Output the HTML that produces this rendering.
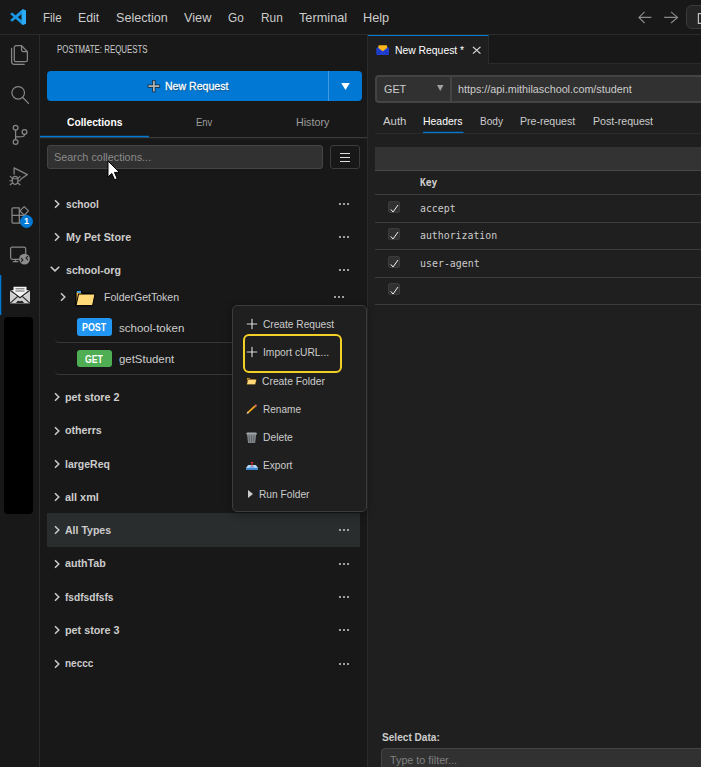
<!DOCTYPE html>
<html lang="en">
<head>
<meta charset="utf-8">
<title>Postmate: Requests</title>
<style>
*{box-sizing:border-box;margin:0;padding:0}
html,body{width:701px;height:767px;overflow:hidden;background:#181818}
body{position:relative;font-family:"Liberation Sans","DejaVu Sans",sans-serif;font-size:12px;color:#cccccc;-webkit-font-smoothing:antialiased}
.abs{position:absolute}
.t{position:absolute;white-space:nowrap;line-height:16px}
/* title bar */
#titlebar{position:absolute;left:0;top:0;width:701px;height:35px;background:#181818;border-bottom:1px solid #2b2b2b}
.menu{font-size:13.5px;color:#cccccc;top:9px}
/* activity bar */
#activity{position:absolute;left:0;top:35px;width:40px;height:732px;background:#181818;border-right:1px solid #2b2b2b}
/* sidebar */
#sidebar{position:absolute;left:40px;top:35px;width:328px;height:732px;background:#181818;border-right:1px solid #2b2b2b}
/* editor */
#tabbar{position:absolute;left:368px;top:35px;width:333px;height:29px;background:#181818;border-bottom:1px solid #2b2b2b}
#tab{position:absolute;left:0;top:0;width:121px;height:29px;background:#1f1f1f;border-top:1px solid #0078d4;border-right:1px solid #2b2b2b}
#editor{position:absolute;left:368px;top:64px;width:333px;height:703px;background:#1f1f1f}
.row{position:absolute;left:0;width:328px;height:33px}
.name{font-weight:bold;font-size:11.5px;color:#cccccc;left:25px}
.dots{position:absolute;width:12px;height:3px}
.dots i{position:absolute;top:0;width:2px;height:2px;background:#cccccc;border-radius:1px}
.chev{position:absolute}
.mi{font-size:11.5px;color:#cccccc}
.hline{position:absolute;height:1px;background:#2b2b2b}
.mono{font-family:"DejaVu Sans Mono","Liberation Mono",monospace;font-size:10px;color:#cccccc}
.cb{position:absolute;left:388px;width:12px;height:12px;background:#313131;border:1px solid #3c3c3c;border-radius:2px}
</style>
</head>
<body>

<!-- ============ TITLE BAR ============ -->
<div id="titlebar">
  <svg class="abs" style="left:9.8px;top:8.9px" width="16.6" height="16.2" viewBox="0 0 16.6 16.2">
    <path d="M12.7 0 L11.5 5.3 L2 12.7 L0.2 11.1 Z" fill="#1a96e6"/>
    <path d="M12.7 16.2 L11.5 10.9 L2 3.5 L0.2 5.1 Z" fill="#1a96e6"/>
    <path d="M11.5 2.4 L12.7 0 L16.6 1.8 V14.4 L12.7 16.2 L11.5 13.8 Z" fill="#2aabf3"/>
  </svg>
  <span id="t0" class="t menu" style="left:43.3px;top:10px;transform:scaleX(0.8512);transform-origin:0 50%;">File</span>
  <span id="t1" class="t menu" style="left:78.4px;top:10px;transform:scaleX(0.9099);transform-origin:0 50%;">Edit</span>
  <span id="t2" class="t menu" style="left:116.3px;top:10px;transform:scaleX(0.9312);transform-origin:0 50%;">Selection</span>
  <span id="t3" class="t menu" style="left:184.3px;top:10px;transform:scaleX(0.9413);transform-origin:0 50%;">View</span>
  <span id="t4" class="t menu" style="left:227.5px;top:10px;transform:scaleX(0.8739);transform-origin:0 50%;">Go</span>
  <span id="t5" class="t menu" style="left:260.8px;top:10px;transform:scaleX(0.88);transform-origin:0 50%;">Run</span>
  <span id="t6" class="t menu" style="left:298.8px;top:10px;transform:scaleX(0.9434);transform-origin:0 50%;">Terminal</span>
  <span id="t7" class="t menu" style="left:362.7px;top:10px;transform:scaleX(0.94);transform-origin:0 50%;">Help</span>
  <svg class="abs" style="left:630px;top:0" width="71" height="34" viewBox="630 0 71 34" fill="none" stroke="#8a8a8a" stroke-width="1.1">
    <path d="M651.4 17.4 H639 M644.6 11.8 L638.9 17.4 L644.6 23"/>
    <path d="M664.2 17.4 H677.4 M671 11.8 L677.6 17.4 L671 23"/>
    <rect x="686.5" y="5.5" width="30" height="23" rx="5.5" fill="#252525" stroke="#3a3a3a" stroke-width="1"/>
    <path d="M701 13.6 H698.4 V23.4 H701" stroke="#c0c0c0" stroke-width="1.2"/>
  </svg>
</div>

<!-- ============ ACTIVITY BAR ============ -->
<div id="activity">
  <svg class="abs" style="left:0;top:-35px" width="40" height="767" viewBox="0 0 40 767" fill="none" stroke="#868686" stroke-width="1.25" stroke-linejoin="round" stroke-linecap="round">
    <!-- files -->
    <path d="M16 45.7 H21.6 L27.4 51.6 V60 a1.7 1.7 0 0 1 -1.7 1.7 H16 a1.7 1.7 0 0 1 -1.7 -1.7 V47.4 A1.7 1.7 0 0 1 16 45.7 Z"/>
    <path d="M21.6 45.9 V50 a1.5 1.5 0 0 0 1.5 1.5 H27.2"/>
    <path d="M11.6 48.4 V61.6 a2.8 2.8 0 0 0 2.8 2.8 H24.2"/>
    <!-- search -->
    <circle cx="18.2" cy="92.8" r="6.3"/>
    <path d="M22.8 97.5 L28.5 103.4"/>
    <!-- source control -->
    <circle cx="15.6" cy="127.8" r="2.4"/>
    <circle cx="24.5" cy="132" r="2.4"/>
    <circle cx="15.6" cy="141.9" r="2.4"/>
    <path d="M15.6 130.2 V139.5 M24.5 134.4 C24.5 137.2 22 136.7 15.8 136.9"/>
    <!-- run and debug -->
    <path d="M14.1 174 V167.9 L27.4 174.6 L20.6 179.3"/>
    <ellipse cx="15.1" cy="180.3" rx="2.9" ry="4"/>
    <path d="M12.4 178.4 L10.2 176.4 M17.8 178.4 L20 176.4 M12.2 180.8 H9.8 M18 180.8 H20.4 M12.4 183 L10.2 184.8 M17.8 183 L20 184.8 M12.6 178.7 H17.6" stroke-width="1.1"/>
    <!-- extensions -->
    <path d="M13.2 207.9 H19.3 V223.2 H13.2 a1.2 1.2 0 0 1 -1.2 -1.2 V209.1 a1.2 1.2 0 0 1 1.2 -1.2 Z M12 215.4 H27 V222 a1.2 1.2 0 0 1 -1.2 1.2 H19.3"/>
    <path d="M24.2 206.6 L28.5 210.9 L24.2 215.2 L19.9 210.9 Z"/>
    <!-- remote explorer -->
    <path d="M19 259.3 H12.4 a1.8 1.8 0 0 1 -1.8 -1.8 V248.9 a1.8 1.8 0 0 1 1.8 -1.8 H23.9 a1.8 1.8 0 0 1 1.8 1.8 V253.5"/>
    <path d="M13.2 261.6 H17.8 M15.6 259.5 V261.4"/>
  </svg>
  <div class="abs" style="left:20px;top:180px;width:13px;height:13px;border-radius:7px;background:#0078d4"></div>
  <span id="t9" class="t" style="left:24px;top:180px;font-size:9px;font-weight:bold;color:#fff;line-height:13px">1</span>
  <svg class="abs" style="left:18px;top:218px" width="13" height="13" viewBox="0 0 13 13">
    <circle cx="6.5" cy="6.1" r="5.4" fill="#8c8c8c"/>
    <path d="M3 5 L4.9 6.9 L3 8.8 M9.9 3.2 L8 5.1 L9.9 7" fill="none" stroke="#1f1f1f" stroke-width="1.1"/>
  </svg>
  <!-- postmate (active) -->
  <div class="abs" style="left:0;top:240px;width:1px;height:40px;background:#0078d4"></div>
  <div class="abs" style="left:1px;top:240px;width:1px;height:40px;background:#0078d4;opacity:.3"></div>
  <svg class="abs" style="left:9px;top:251px" width="22" height="18" viewBox="0 0 22 18">
    <path d="M1 4 H21 V17.4 H1 Z" fill="#cfcfcf"/>
    <path d="M4.5 0.7 H17.5 V9 L11 12 L4.5 9 Z" fill="#f4f4f4"/>
    <path d="M6.5 2.8 H15.5 M6.5 5 H15.5" stroke="#555555" stroke-width="0.9"/>
    <path d="M1.2 4.2 L11 11.8 L20.8 4.2 M1.2 17.2 L9 10.2 M20.8 17.2 L13 10.2" stroke="#222222" stroke-width="1.1" fill="none"/>
    <path d="M7 17 Q9 13.5 11 15.5 Q13 13.5 15 17 Z" fill="#222222"/>
  </svg>
  <!-- black box -->
  <div class="abs" style="left:4px;top:282px;width:29px;height:197px;background:#000;border-radius:4px"></div>
</div>

<!-- ============ SIDEBAR ============ -->
<div id="sidebar">
  <span id="t10" class="t" style="left:16.9px;top:7.1px;transform:scaleX(0.7892);transform-origin:0 50%;font-size:10px;color:#cccccc">POSTMATE: REQUESTS</span>

  <!-- new request button -->
  <div class="abs" style="left:7px;top:36px;width:315px;height:30px;background:#0078d4;border-radius:4px"></div>
  <div class="abs" style="left:288px;top:36px;width:1px;height:30px;background:#4599df"></div>
  <svg class="abs" style="left:107px;top:44px" width="14" height="14" viewBox="0 0 14 14" fill="none"><path d="M6.9 2.5 V11.7 M2.3 7.1 H11.5" stroke="#1a1a1a" stroke-width="3.2" stroke-linecap="square" stroke-opacity="0.85"/><path d="M6.9 2.5 V11.7 M2.3 7.1 H11.5" stroke="#b4b4b4" stroke-width="1.7" stroke-linecap="square"/></svg>
  <span id="t11" class="t" style="left:125px;top:43.21px;transform:scaleX(0.9178);transform-origin:0 50%;font-size:11.5px;color:#ffffff;-webkit-text-stroke:0.3px #fff;text-shadow:0.5px 1px 1px rgba(0,0,0,.45)">New Request</span>
  <svg class="abs" style="left:301px;top:48px" width="9" height="7" viewBox="0 0 9 7"><path d="M0.2 0 H8.8 L4.5 7 Z" fill="#ffffff"/></svg>

  <!-- tabs -->
  <span id="t12" class="t" style="left:26.9px;top:79.21px;transform:scaleX(0.8938);transform-origin:0 50%;font-size:11.5px;font-weight:bold;color:#ffffff">Collections</span>
  <span id="t13" class="t" style="left:155.8px;top:79.21px;transform:scaleX(0.8254);transform-origin:0 50%;font-size:11.5px;color:#9d9d9d">Env</span>
  <span id="t14" class="t" style="left:255.6px;top:79.21px;transform:scaleX(0.9322);transform-origin:0 50%;font-size:11.5px;color:#9d9d9d">History</span>
  <svg class="abs" style="left:0;top:99px" width="327" height="6" viewBox="0 0 327 6"><rect x="0" y="3.1" width="327" height="1.1" fill="#404040"/><rect x="0" y="1.8" width="109" height="1.4" fill="#0078d4"/></svg>

  <!-- search -->
  <div class="abs" style="left:7px;top:110px;width:276px;height:24px;background:#313131;border:1px solid #444444;border-radius:3px"></div>
  <span id="t15" class="t" style="left:14.0px;top:114.4px;transform:scaleX(0.987);transform-origin:0 50%;font-size:11px;color:#8a8a8a">Search collections...</span>
  <div class="abs" style="left:290px;top:110px;width:30px;height:24px;background:#181818;border:1px solid #3c3c3c;border-radius:3px"></div>
  <svg class="abs" style="left:300px;top:117px" width="10" height="10" viewBox="0 0 10 10" stroke="#dddddd" stroke-width="1"><path d="M0 1.5 H10 M0 5.5 H10 M0 9.5 H10"/></svg>

  <!-- collections list: placeholder, filled below -->
  <div id="list">
<div class="abs" style="left:7px;top:478px;width:313px;height:34px;background:#2a2d2e"></div>
<svg class="abs" style="left:12.5px;top:163.2px" width="8" height="12" viewBox="0 0 8 12" fill="none" stroke="#cccccc" stroke-width="1.5"><path d="M2 2.2 L5.8 6 L2 9.8"/></svg>
<span id="t16" class="t name" style="left:25.9px;top:161px;transform:scaleX(0.886);transform-origin:0 50%;">school</span>
<div class="dots" style="left:299px;top:168px"><i style="left:0"></i><i style="left:4px"></i><i style="left:8px"></i></div>
<svg class="abs" style="left:12.5px;top:196.3px" width="8" height="12" viewBox="0 0 8 12" fill="none" stroke="#cccccc" stroke-width="1.5"><path d="M2 2.2 L5.8 6 L2 9.8"/></svg>
<span id="t17" class="t name" style="left:25.9px;top:194.21px;transform:scaleX(0.9358);transform-origin:0 50%;">My Pet Store</span>
<div class="dots" style="left:299px;top:201px"><i style="left:0"></i><i style="left:4px"></i><i style="left:8px"></i></div>
<svg class="abs" style="left:9px;top:230.4px" width="12" height="8" viewBox="0 0 12 8" fill="none" stroke="#cccccc" stroke-width="1.5"><path d="M1.7 1.7 L6 5.9 L10.3 1.7"/></svg>
<span id="t18" class="t name" style="left:25.8px;top:227.4px;transform:scaleX(0.9249);transform-origin:0 50%;">school-org</span>
<div class="dots" style="left:299px;top:234px"><i style="left:0"></i><i style="left:4px"></i><i style="left:8px"></i></div>
<svg class="abs" style="left:12.5px;top:356.3px" width="8" height="12" viewBox="0 0 8 12" fill="none" stroke="#cccccc" stroke-width="1.5"><path d="M2 2.2 L5.8 6 L2 9.8"/></svg>
<span id="t19" class="t name" style="left:25.2px;top:354.21px;transform:scaleX(0.9383);transform-origin:0 50%;">pet store 2</span>
<div class="dots" style="left:299px;top:361px"><i style="left:0"></i><i style="left:4px"></i><i style="left:8px"></i></div>
<svg class="abs" style="left:12.5px;top:389.5px" width="8" height="12" viewBox="0 0 8 12" fill="none" stroke="#cccccc" stroke-width="1.5"><path d="M2 2.2 L5.8 6 L2 9.8"/></svg>
<span id="t20" class="t name" style="left:25.2px;top:387.4px;transform:scaleX(0.9292);transform-origin:0 50%;">otherrs</span>
<div class="dots" style="left:299px;top:394px"><i style="left:0"></i><i style="left:4px"></i><i style="left:8px"></i></div>
<svg class="abs" style="left:12.5px;top:422.7px" width="8" height="12" viewBox="0 0 8 12" fill="none" stroke="#cccccc" stroke-width="1.5"><path d="M2 2.2 L5.8 6 L2 9.8"/></svg>
<span id="t21" class="t name" style="left:25.2px;top:420.6px;transform:scaleX(0.9116);transform-origin:0 50%;">largeReq</span>
<div class="dots" style="left:299px;top:428px"><i style="left:0"></i><i style="left:4px"></i><i style="left:8px"></i></div>
<svg class="abs" style="left:12.5px;top:455.9px" width="8" height="12" viewBox="0 0 8 12" fill="none" stroke="#cccccc" stroke-width="1.5"><path d="M2 2.2 L5.8 6 L2 9.8"/></svg>
<span id="t22" class="t name" style="left:25.2px;top:453.8px;transform:scaleX(0.9446);transform-origin:0 50%;">all xml</span>
<div class="dots" style="left:299px;top:461px"><i style="left:0"></i><i style="left:4px"></i><i style="left:8px"></i></div>
<svg class="abs" style="left:12.5px;top:489.1px" width="8" height="12" viewBox="0 0 8 12" fill="none" stroke="#cccccc" stroke-width="1.5"><path d="M2 2.2 L5.8 6 L2 9.8"/></svg>
<span id="t23" class="t name" style="left:25.2px;top:487px;transform:scaleX(0.9171);transform-origin:0 50%;">All Types</span>
<div class="dots" style="left:299px;top:494px"><i style="left:0"></i><i style="left:4px"></i><i style="left:8px"></i></div>
<svg class="abs" style="left:12.5px;top:522.5px" width="8" height="12" viewBox="0 0 8 12" fill="none" stroke="#cccccc" stroke-width="1.5"><path d="M2 2.2 L5.8 6 L2 9.8"/></svg>
<span id="t24" class="t name" style="left:25.2px;top:520.4px;transform:scaleX(0.9295);transform-origin:0 50%;">authTab</span>
<div class="dots" style="left:299px;top:528px"><i style="left:0"></i><i style="left:4px"></i><i style="left:8px"></i></div>
<svg class="abs" style="left:12.5px;top:555.9px" width="8" height="12" viewBox="0 0 8 12" fill="none" stroke="#cccccc" stroke-width="1.5"><path d="M2 2.2 L5.8 6 L2 9.8"/></svg>
<span id="t25" class="t name" style="left:25.2px;top:553.8px;transform:scaleX(0.8807);transform-origin:0 50%;">fsdfsdfsfs</span>
<div class="dots" style="left:299px;top:561px"><i style="left:0"></i><i style="left:4px"></i><i style="left:8px"></i></div>
<svg class="abs" style="left:12.5px;top:589.1px" width="8" height="12" viewBox="0 0 8 12" fill="none" stroke="#cccccc" stroke-width="1.5"><path d="M2 2.2 L5.8 6 L2 9.8"/></svg>
<span id="t26" class="t name" style="left:25.2px;top:587px;transform:scaleX(0.9383);transform-origin:0 50%;">pet store 3</span>
<div class="dots" style="left:299px;top:594px"><i style="left:0"></i><i style="left:4px"></i><i style="left:8px"></i></div>
<svg class="abs" style="left:12.5px;top:622.5px" width="8" height="12" viewBox="0 0 8 12" fill="none" stroke="#cccccc" stroke-width="1.5"><path d="M2 2.2 L5.8 6 L2 9.8"/></svg>
<span id="t27" class="t name" style="left:25.2px;top:620.4px;transform:scaleX(0.87);transform-origin:0 50%;">neccc</span>
<div class="dots" style="left:299px;top:628px"><i style="left:0"></i><i style="left:4px"></i><i style="left:8px"></i></div>
<svg class="abs" style="left:19.2px;top:256.4px" width="8" height="12" viewBox="0 0 8 12" fill="none" stroke="#cccccc" stroke-width="1.5"><path d="M2 2.2 L5.8 6 L2 9.8"/></svg>
<svg class="abs" style="left:35px;top:255px" width="21" height="17" viewBox="0 0 21 17"><path d="M1 1.2 H6.2 L7 3.4 H16 V15.6 H1 Z" fill="#e8b040" stroke="#000000" stroke-width="1.2" stroke-linejoin="round"/><rect x="1.8" y="0.9" width="4.2" height="2" fill="#3d9df0"/><path d="M3.6 4 H20 L17.6 15.6 H1 Z" fill="#ffd978" stroke="#000000" stroke-width="1" stroke-linejoin="round"/></svg>
<span id="t28" class="t" style="left:64.1px;top:254.3px;transform:scaleX(0.9179);transform-origin:0 50%;font-size:11.5px;color:#cccccc">FolderGetToken</span>
<div class="dots" style="left:293.5px;top:261px"><i style="left:0"></i><i style="left:4px"></i><i style="left:8px"></i></div>
<div class="abs" style="left:37px;top:283px;width:35px;height:18px;background:#2196f3;border-radius:3px"></div>
<span id="t29" class="t" style="left:42px;top:284.9px;transform:scaleX(0.8868);transform-origin:0 50%;font-size:10px;font-weight:bold;color:#ffffff">POST</span>
<span id="t30" class="t" style="left:78.5px;top:285px;transform:scaleX(1.0022);transform-origin:0 50%;font-size:11.5px;color:#cccccc">school-token</span>
<div class="abs" style="left:14.5px;top:278px;width:306px;height:30px;border-bottom:1px solid #363636;border-radius:4px"></div>
<div class="abs" style="left:37px;top:315px;width:35px;height:17px;background:#4fae54;border-radius:3px"></div>
<span id="t31" class="t" style="left:44.9px;top:316.9px;transform:scaleX(0.872);transform-origin:0 50%;font-size:10px;font-weight:bold;color:#ffffff">GET</span>
<span id="t32" class="t" style="left:78.5px;top:315.9px;transform:scaleX(0.9923);transform-origin:0 50%;font-size:11.5px;color:#cccccc">getStudent</span>
<div class="abs" style="left:14.5px;top:310px;width:306px;height:30px;border-bottom:1px solid #363636;border-radius:4px"></div>
</div>
</div>

<!-- ============ EDITOR ============ -->
<div id="tabbar">
  <div id="tab">
    <svg class="abs" style="left:7.8px;top:9.3px" width="13.5" height="11" viewBox="0 0 14 12" preserveAspectRatio="none">
      <path d="M0.3 3.6 L2.4 1.8 H11.6 L13.7 3.6 V10.2 a0.8 0.8 0 0 1 -0.8 0.8 H1.1 a0.8 0.8 0 0 1 -0.8 -0.8 Z" fill="#1f3fd2"/>
      <path d="M2.5 1 a0.7 0.7 0 0 1 0.7 -0.6 H10.8 a0.7 0.7 0 0 1 0.7 0.6 V3.2 L7 6.8 L2.5 3.2 Z" fill="#ffb81c"/>
      <path d="M0.5 10.6 L5 6.4 M13.5 10.6 L9 6.4" stroke="#142a9a" stroke-width="0.7" fill="none"/>
    </svg>
    <span id="t33" class="t" style="left:27.3px;top:6.3px;transform:scaleX(0.9012);transform-origin:0 50%;font-size:11.5px;color:#ffffff">New Request *</span>
    <svg class="abs" style="left:103.5px;top:10px" width="9.4" height="8.6" viewBox="0 0 10 10" preserveAspectRatio="none" stroke="#e0e0e0" stroke-width="1.2"><path d="M1 1 L9 9 M9 1 L1 9"/></svg>
  </div>
</div>
<div id="editor">
<div class="abs" style="left:7px;top:11px;width:340px;height:28px;background:#313131;border:2px solid #444444;border-radius:4px"></div>
<div class="abs" style="left:82px;top:12px;width:2px;height:26px;background:#444444"></div>
<span id="t34" class="t" style="left:15.5px;top:17.1px;transform:scaleX(0.9395);transform-origin:0 50%;font-size:11.5px;color:#cccccc">GET</span>
<svg class="abs" style="left:69px;top:21px" width="6.5" height="6" viewBox="0 0 7 7" preserveAspectRatio="none"><path d="M0 0 H7 L3.5 7 Z" fill="#a0a0a0"/></svg>
<span id="t35" class="t" style="left:90.2px;top:16.9px;transform:scaleX(0.9797);transform-origin:0 50%;font-size:11px;color:#cccccc">https://api.mithilaschool.com/student</span>
<span id="t36" class="t" style="left:15px;top:48.8px;transform:scaleX(0.9915);transform-origin:0 50%;font-size:11.5px;color:#cccccc">Auth</span>
<span id="t37" class="t" style="left:55px;top:48.8px;transform:scaleX(0.9077);transform-origin:0 50%;font-size:11.5px;color:#ffffff">Headers</span>
<span id="t38" class="t" style="left:112px;top:48.8px;transform:scaleX(0.8787);transform-origin:0 50%;font-size:11.5px;color:#cccccc">Body</span>
<span id="t39" class="t" style="left:152.2px;top:48.8px;transform:scaleX(0.9188);transform-origin:0 50%;font-size:11.5px;color:#cccccc">Pre-request</span>
<span id="t40" class="t" style="left:225.4px;top:48.8px;transform:scaleX(0.9207);transform-origin:0 50%;font-size:11.5px;color:#cccccc">Post-request</span>
<div class="hline" style="left:7px;top:69px;width:330px;background:#2b2b2b"></div>
<svg class="abs" style="left:55px;top:66px" width="41" height="4" viewBox="0 0 41 4"><rect x="0" y="1.8" width="40.4" height="1.3" fill="#0078d4"/></svg>
<div class="abs" style="left:7px;top:83px;width:330px;height:23px;background:#333333"></div>
<div class="hline" style="left:7px;top:106px;width:330px;background:#484848"></div>
<span id="t41" class="t mono" style="left:52.2px;top:111px;transform:scaleX(0.9651);transform-origin:0 50%;font-weight:bold">Key</span>
<div class="hline" style="left:7px;top:130px;width:330px;background:#3c3c3c"></div>
<div class="hline" style="left:7px;top:158px;width:330px;background:#3c3c3c"></div>
<div class="hline" style="left:7px;top:185px;width:330px;background:#3c3c3c"></div>
<div class="hline" style="left:7px;top:213px;width:330px;background:#3c3c3c"></div>
<div class="hline" style="left:7px;top:240px;width:330px;background:#3c3c3c"></div>
<div class="cb" style="left:20px;top:137px"></div>
<svg class="abs" style="left:22px;top:139.5px" width="9" height="9" viewBox="0 0 9 9" fill="none" stroke="#f0f0f0" stroke-width="1"><path d="M0.8 5.4 L3 8 L8 1"/></svg>
<span id="t42" class="t mono" style="left:51.8px;top:136.71px;transform:scaleX(0.9848);transform-origin:0 50%;">accept</span>
<div class="cb" style="left:20px;top:164px"></div>
<svg class="abs" style="left:22px;top:166.5px" width="9" height="9" viewBox="0 0 9 9" fill="none" stroke="#f0f0f0" stroke-width="1"><path d="M0.8 5.4 L3 8 L8 1"/></svg>
<span id="t43" class="t mono" style="left:51.8px;top:163.6px;transform:scaleX(0.9851);transform-origin:0 50%;">authorization</span>
<div class="cb" style="left:20px;top:192px"></div>
<svg class="abs" style="left:22px;top:194.5px" width="9" height="9" viewBox="0 0 9 9" fill="none" stroke="#f0f0f0" stroke-width="1"><path d="M0.8 5.4 L3 8 L8 1"/></svg>
<span id="t44" class="t mono" style="left:51.8px;top:191.5px;transform:scaleX(0.9924);transform-origin:0 50%;">user-agent</span>
<div class="cb" style="left:20px;top:219px"></div>
<svg class="abs" style="left:22px;top:221.5px" width="9" height="9" viewBox="0 0 9 9" fill="none" stroke="#f0f0f0" stroke-width="1"><path d="M0.8 5.4 L3 8 L8 1"/></svg>
<span id="t45" class="t" style="left:14.3px;top:665.3px;transform:scaleX(0.8786);transform-origin:0 50%;font-size:11.5px;font-weight:bold;color:#cccccc">Select Data:</span>
<div class="abs" style="left:13px;top:684px;width:330px;height:26px;background:#313131;border:1.5px solid #454545;border-radius:4px"></div>
<span id="t46" class="t" style="left:21.7px;top:688.3px;transform:scaleX(0.9799);transform-origin:0 50%;font-size:11px;color:#808080">Type to filter...</span>
</div>

<div id="ctx" class="abs" style="left:232px;top:305px;width:135px;height:207px;background:#1f1f1f;border:1px solid #3c3c3c;border-radius:5px;box-shadow:0 2px 8px rgba(0,0,0,.36)"><div class="abs" style="left:1px;top:0">
<svg class="abs" style="left:12px;top:12px" width="12" height="12" viewBox="0 0 12 12" fill="none"><path d="M6 0.3 V11.7 M0.3 6 H11.7" stroke="#000000" stroke-opacity="0.55" stroke-width="2.6"/><path d="M6 0.7 V11.3 M0.7 6 H11.3" stroke="#e4e4e4" stroke-width="1.15"/></svg>
<span id="t47" class="t mi" style="left:28.9px;top:9.8px;transform:scaleX(0.8834);transform-origin:0 50%;">Create Request</span>
<div class="abs" style="left:9px;top:28px;width:98.5px;height:39px;border:2px solid #f2d024;border-radius:6px"></div>
<svg class="abs" style="left:12px;top:40px" width="12" height="12" viewBox="0 0 12 12" fill="none"><path d="M6 0.3 V11.7 M0.3 6 H11.7" stroke="#000000" stroke-opacity="0.55" stroke-width="2.6"/><path d="M6 0.7 V11.3 M0.7 6 H11.3" stroke="#e4e4e4" stroke-width="1.15"/></svg>
<span id="t48" class="t mi" style="left:28.9px;top:38px;transform:scaleX(0.892);transform-origin:0 50%;">Import cURL...</span>
<svg class="abs" style="left:11.5px;top:71.2px" width="11.2" height="8.2" viewBox="0 0 11.2 8.2"><path d="M0.5 0.6 H3.6 L4.3 1.5 H9.4 V7.7 H0.5 Z" fill="#e8a93a" stroke="#0c0c0c" stroke-width="0.7"/><path d="M1.9 2.2 H10.8 L9.5 7.7 H0.5 Z" fill="#ffd778" stroke="#0c0c0c" stroke-width="0.6"/></svg>
<span id="t49" class="t mi" style="left:28.4px;top:67.21px;transform:scaleX(0.8963);transform-origin:0 50%;">Create Folder</span>
<svg class="abs" style="left:12.4px;top:98px" width="11.4" height="10.4" viewBox="0 0 11.4 10.4"><path d="M0.6 9.9 L1.5 7.4 L8.6 1 L10.2 2.7 L3.1 9.1 Z" fill="#f7a823" stroke="#111111" stroke-width="0.6" stroke-linejoin="round"/><path d="M8.6 1 L9.4 0.4 Q10.6 0.3 10.9 1.6 L10.2 2.7 Z" fill="#ef6a7a"/><path d="M0.6 9.9 L1.5 7.4 L3.1 9.1 Z" fill="#e9d9b6"/><path d="M0.6 9.9 L1 8.9 L1.6 9.5 Z" fill="#444444"/></svg>
<span id="t50" class="t mi" style="left:29.3px;top:94.8px;transform:scaleX(0.8744);transform-origin:0 50%;">Rename</span>
<svg class="abs" style="left:12.4px;top:125.5px" width="11.2" height="11.6" viewBox="0 0 11.2 11.6"><path d="M1 2.2 H10.2 L9.2 10.6 Q9.1 11.3 8.3 11.3 H2.9 Q2.1 11.3 2 10.6 Z" fill="#82888c"/><path d="M0.4 1.6 Q0.4 0.5 1.6 0.5 H9.6 Q10.8 0.5 10.8 1.6 V2.4 H0.4 Z" fill="#a3a9ad"/><path d="M3.1 3.4 L3.5 10.4 M5.6 3.4 V10.4 M8.1 3.4 L7.7 10.4" stroke="#5b6064" stroke-width="0.9" fill="none"/></svg>
<span id="t51" class="t mi" style="left:29.3px;top:123px;transform:scaleX(0.8973);transform-origin:0 50%;">Delete</span>
<svg class="abs" style="left:11.6px;top:156.2px" width="12" height="8.4" viewBox="0 0 12 8.4"><path d="M0.4 5.2 L2.2 3 H9.8 L11.6 5.2 V8 H0.4 Z" fill="#b5dbf7"/><path d="M0.4 5.9 H11.6 V8 H0.4 Z" fill="#3f86d2"/><path d="M3.6 4.4 H8.4 L7.8 5.6 H4.2 Z" fill="#5aa0e0"/><path d="M6 0.8 V4.8" stroke="#e0313b" stroke-width="1"/><path d="M4.8 0.6 H7.2" stroke="#e0313b" stroke-width="1"/></svg>
<span id="t52" class="t mi" style="left:29.3px;top:150.8px;transform:scaleX(0.8845);transform-origin:0 50%;">Export</span>
<svg class="abs" style="left:14px;top:184px" width="5" height="8" viewBox="0 0 5 8"><path d="M0 0 L5 4 L0 8 Z" fill="#cccccc"/></svg>
<span id="t53" class="t mi" style="left:24.8px;top:180.1px;transform:scaleX(0.8868);transform-origin:0 50%;">Run Folder</span>
</div></div>
<svg class="abs" style="left:107px;top:160px" width="14" height="21" viewBox="0 0 14 21"><path d="M1 1 V17 L4.8 13.4 L7.6 19.8 L10.2 18.6 L7.4 12.4 H12.4 Z" fill="#ffffff" stroke="#000000" stroke-width="1"/></svg>
</body>
</html>
